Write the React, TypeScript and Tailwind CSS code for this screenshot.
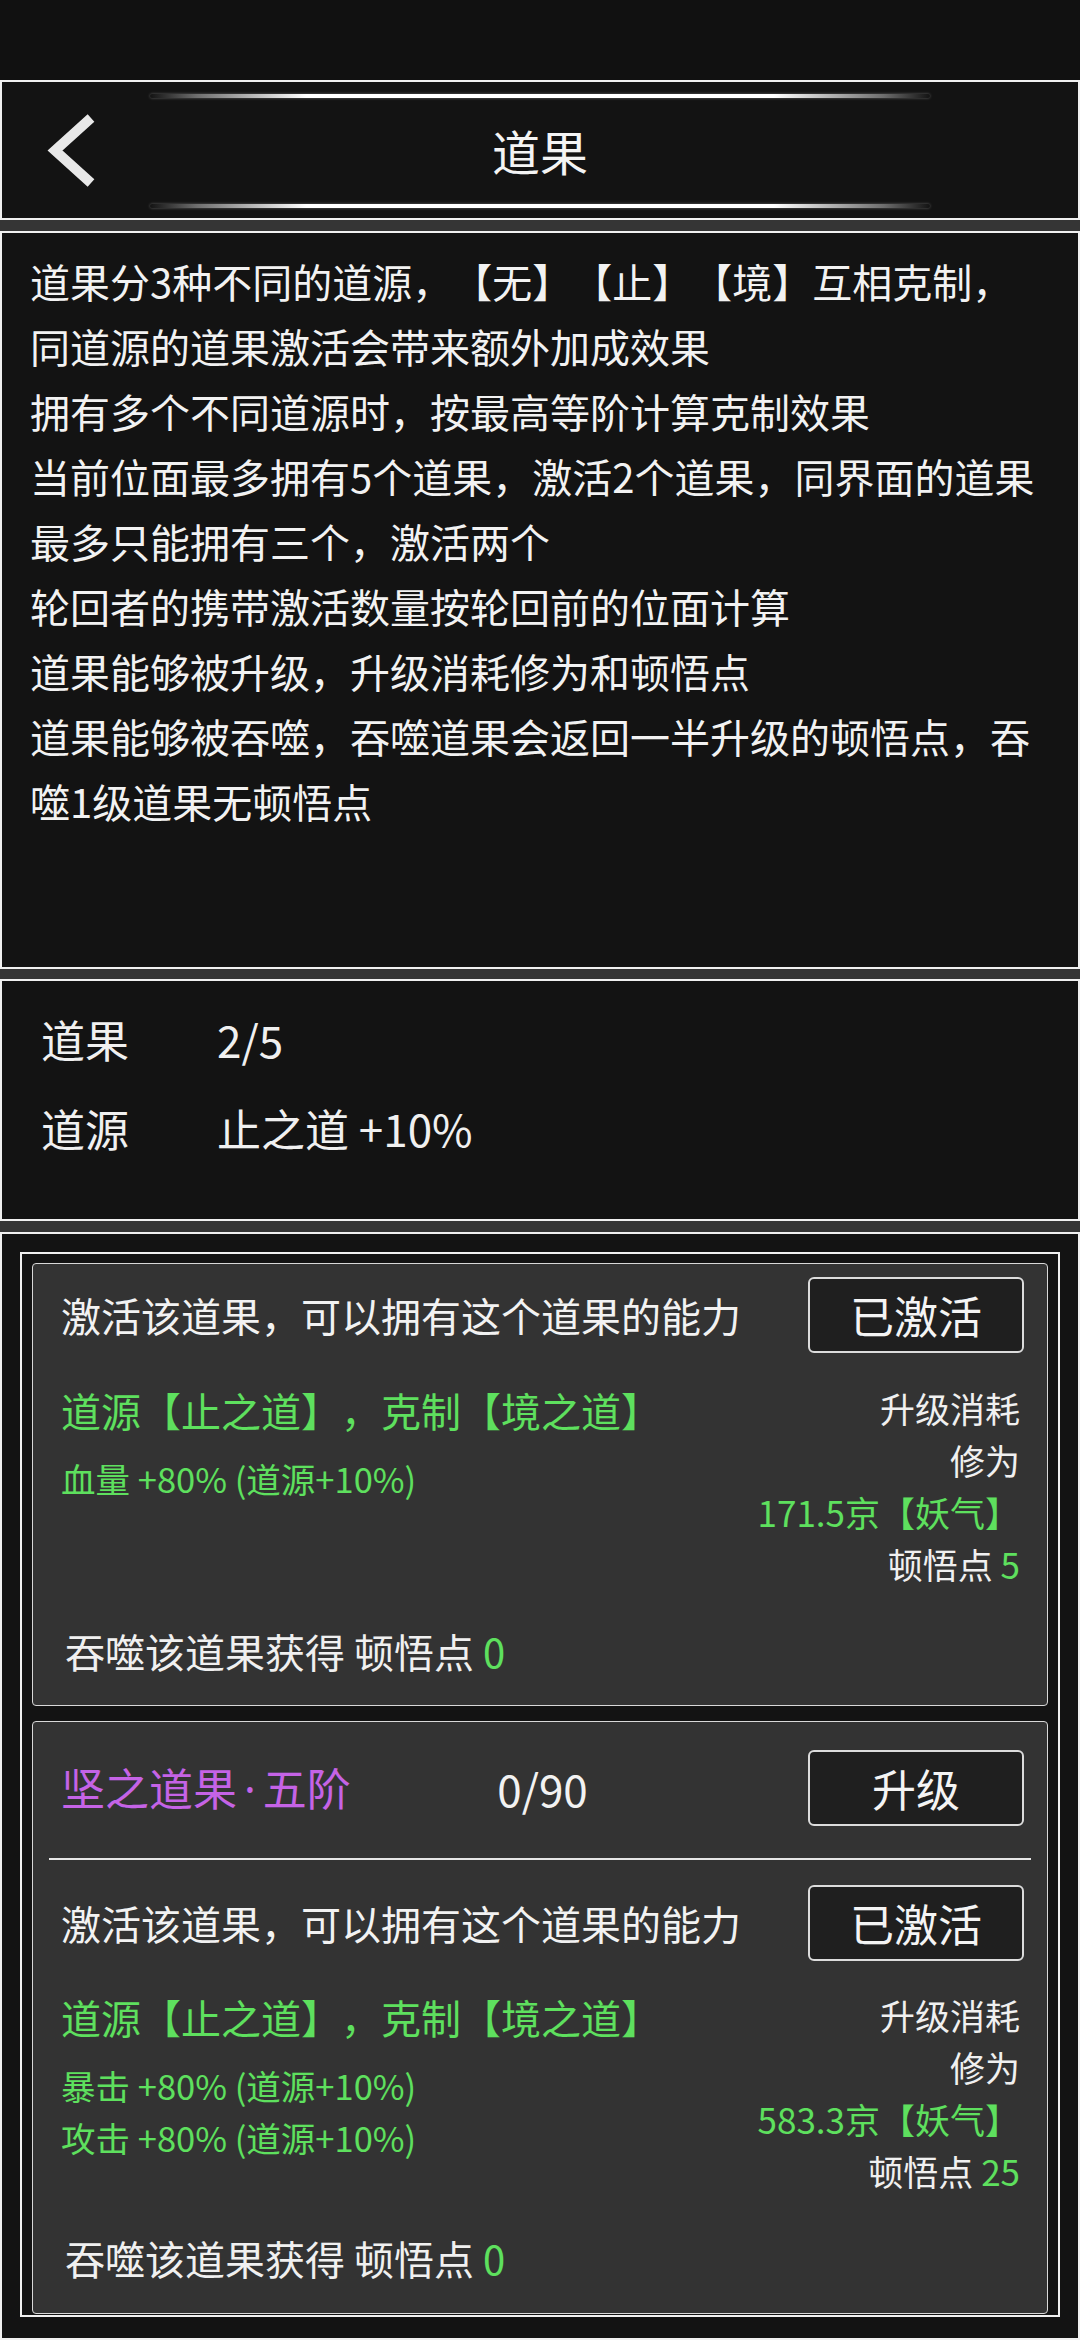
import React from "react";

const FONT = "font-['Noto_Sans_CJK_SC','Noto_Sans',sans-serif]";

const intro = [
  "道果分3种不同的道源，【无】【止】【境】互相克制，",
  "同道源的道果激活会带来额外加成效果",
  "拥有多个不同道源时，按最高等阶计算克制效果",
  "当前位面最多拥有5个道果，激活2个道果，同界面的道果",
  "最多只能拥有三个，激活两个",
  "轮回者的携带激活数量按轮回前的位面计算",
  "道果能够被升级，升级消耗修为和顿悟点",
  "道果能够被吞噬，吞噬道果会返回一半升级的顿悟点，吞",
  "噬1级道果无顿悟点",
];

function GlowLine() {
  return (
    <div className="w-[780px] h-[4px] rounded-full bg-[linear-gradient(90deg,rgba(255,255,255,0)_0%,rgba(200,200,200,0.5)_6%,#ffffff_20%,#ffffff_80%,rgba(200,200,200,0.5)_94%,rgba(255,255,255,0)_100%)] shadow-[0_0_3px_rgba(255,255,255,0.35)]" />
  );
}

function Btn({ children }: { children: React.ReactNode }) {
  return (
    <div className="w-[216px] h-[76px] rounded-[6px] border-2 border-[#dcdcdc] bg-[#1f1f1f] flex items-center justify-center text-[44px] leading-none text-[#f4f4f4]">
      {children}
    </div>
  );
}

function Body({
  stats,
  cost,
  points,
}: {
  stats: string[];
  cost: string;
  points: string;
}) {
  return (
    <div className="flex items-start justify-between">
      <div className="flex flex-col text-[#5ee05e]">
        <div className="h-[56px] leading-[56px] text-[40px] whitespace-nowrap">
          道源【止之道】，克制【境之道】
        </div>
        <div className="mt-[14px] flex flex-col">
          {stats.map((s) => (
            <div key={s} className="h-[52px] leading-[52px] text-[34.5px] whitespace-nowrap">
              {s}
            </div>
          ))}
        </div>
      </div>
      <div className="mr-[4px] flex flex-col items-end text-[35px] leading-[52px] text-[#f0f0f0]">
        <div className="h-[52px]">升级消耗</div>
        <div className="h-[52px]">修为</div>
        <div className="h-[52px] text-[#5ee05e]">{cost}</div>
        <div className="h-[52px]">
          顿悟点 <span className="text-[#5ee05e]">{points}</span>
        </div>
      </div>
    </div>
  );
}

function Footer() {
  return (
    <div className="mt-[35px] h-[52px] leading-[52px] text-[40px] pl-[4px] text-[#f0f0f0] whitespace-nowrap">
      吞噬该道果获得 顿悟点 <span className="text-[#5ee05e]">0</span>
    </div>
  );
}

export default function App() {
  return (
    <div className={`${FONT} [text-spacing-trim:space-all] w-[1080px] h-[2340px] bg-[#353535] flex flex-col overflow-hidden text-[#f0f0f0]`}>
      {/* status bar area */}
      <div className="h-[80px] bg-[#111111] shrink-0" />

      {/* header */}
      <div className="h-[140px] shrink-0 border-2 border-[#f0f0f0] bg-[#131313] flex flex-col items-center pt-[12px] pb-[10px]">
        <GlowLine />
        <div className="flex-1 w-full flex items-center">
          <div className="w-[120px] pl-[38px] flex items-center">
            <svg width="60" height="80" viewBox="0 0 60 80" className="block">
              <polyline
                points="51,7 15,39.5 51,72"
                fill="none"
                stroke="#e8e8e8"
                strokeWidth="10"
                strokeLinejoin="miter"
                strokeLinecap="butt"
              />
            </svg>
          </div>
          <div className="flex-1 text-center text-[48px] leading-none text-[#f4f4f4] -mt-[3px]">道果</div>
          <div className="w-[120px]" />
        </div>
        <GlowLine />
      </div>

      {/* intro */}
      <div className="mt-[11px] h-[738px] shrink-0 border-2 border-[#f0f0f0] bg-[#131313] pt-[16px] pl-[28px]">
        {intro.map((l) => (
          <div key={l} className="h-[65px] leading-[65px] text-[40px] whitespace-nowrap text-[#f2f2f2]">
            {l}
          </div>
        ))}
      </div>

      {/* stats */}
      <div className="mt-[10px] h-[242px] shrink-0 border-2 border-[#f0f0f0] bg-[#131313] pt-[13px] pl-[39px] text-[44px]">
        <div className="h-[89px] flex items-center">
          <div className="w-[176px]">道果</div>
          <div>2/5</div>
        </div>
        <div className="h-[89px] flex items-center">
          <div className="w-[176px]">道源</div>
          <div>止之道 +10%</div>
        </div>
      </div>

      {/* cards */}
      <div className="mt-[11px] h-[1108px] shrink-0 border-2 border-[#f0f0f0] bg-[#131313] pt-[18px] px-[18px]">
        <div className="border-2 border-[#f0f0f0] pt-[9px] pb-[1px] px-[10px] flex flex-col gap-[15px]">
          {/* card 1 */}
          <div className="rounded-[4px] border-[1.5px] border-[#d8d8d8] bg-[#333333] pt-[13px] pb-[28px] pl-[28px] pr-[23px]">
            <div className="h-[76px] flex items-center justify-between">
              <span className="text-[40px] leading-none text-[#f2f2f2]">激活该道果，可以拥有这个道果的能力</span>
              <Btn>已激活</Btn>
            </div>
            <div className="mt-[29px]">
              <Body stats={["血量 +80% (道源+10%)"]} cost="171.5京【妖气】" points="5" />
            </div>
            <Footer />
          </div>

          {/* card 2 */}
          <div className="rounded-[4px] border-[1.5px] border-[#d8d8d8] bg-[#333333] pt-[28px] pb-[29px] px-[16px]">
            <div className="h-[76px] grid grid-cols-[1fr_auto_1fr] items-center pl-[12px] pr-[7px]">
              <span className="text-[44px] leading-none text-[#c563e6] whitespace-nowrap">
                坚之道果<span className="font-['Noto_Sans',sans-serif] px-[7px]">·</span>五阶
              </span>
              <span className="text-[44px] leading-none text-[#f2f2f2]">0/90</span>
              <div className="justify-self-end">
                <Btn>升级</Btn>
              </div>
            </div>
            <div className="mt-[32px] h-[2px] bg-[#e6e6e6]" />
            <div className="pl-[12px] pr-[7px]">
              <div className="mt-[25px] h-[76px] flex items-center justify-between">
                <span className="text-[40px] leading-none text-[#f2f2f2]">激活该道果，可以拥有这个道果的能力</span>
                <Btn>已激活</Btn>
              </div>
              <div className="mt-[28px]">
                <Body
                  stats={["暴击 +80% (道源+10%)", "攻击 +80% (道源+10%)"]}
                  cost="583.3京【妖气】"
                  points="25"
                />
              </div>
              <Footer />
            </div>
          </div>
        </div>
      </div>
    </div>
  );
}
